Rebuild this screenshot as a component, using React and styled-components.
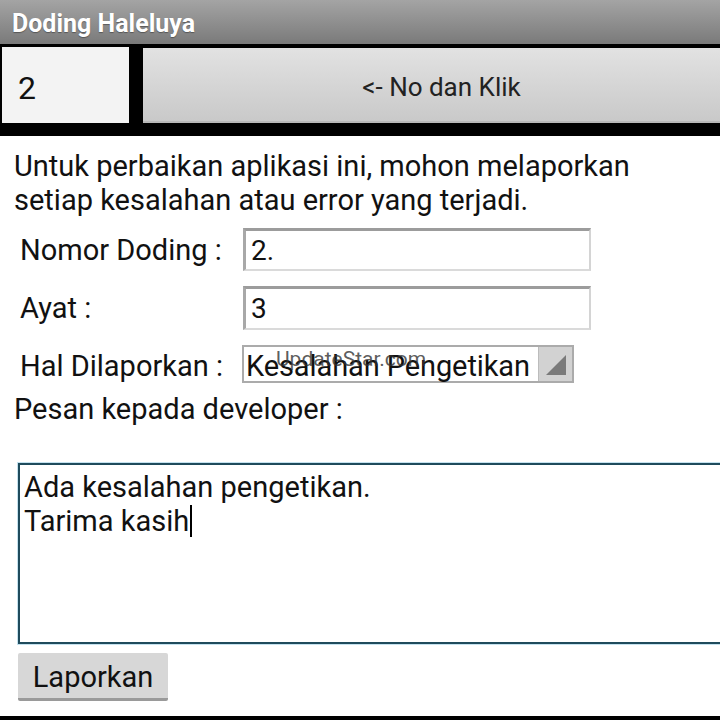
import React from 'react'
import styled, { createGlobalStyle } from 'styled-components'

const Global = createGlobalStyle`
  html, body {
    margin: 0;
    padding: 0;
    background: #ffffff;
  }
  body {
    font-family: Roboto, 'Noto Sans', 'Liberation Sans', sans-serif;
    color: #111;
  }
`

const Screen = styled.div`
  width: 720px;
  height: 720px;
  overflow: hidden;
  display: flex;
  flex-direction: column;
  background: #fff;
`

const TitleBar = styled.div`
  height: 44px;
  flex: none;
  display: flex;
  align-items: center;
  padding: 2px 0 0 12px;
  box-sizing: border-box;
  background: linear-gradient(#a4a4a4, #7a7a7a);
  color: #fff;
  font-size: 25px;
  font-weight: 700;
  text-shadow: 0 1px 1px rgba(0, 0, 0, 0.35);
`

const ActionBar = styled.div`
  flex: none;
  display: flex;
  gap: 14px;
  height: 92px;
  box-sizing: border-box;
  padding: 3px 0 13px 2px;
  background: #000;
`

const NumberBox = styled.div`
  width: 127px;
  display: flex;
  align-items: center;
  padding: 5px 0 0 16px;
  box-sizing: border-box;
  background: #f3f3f3;
  font-size: 32px;
`

const BigButton = styled.div`
  flex: 1;
  display: flex;
  align-items: center;
  justify-content: center;
  margin-top: 1px;
  padding: 4px 0 0 20px;
  background: linear-gradient(#e2e2e2, #c9c9c9);
  border-bottom: 2px solid #b8b8b8;
  font-size: 26px;
  color: #222;
`

const Content = styled.div`
  flex: 1;
  display: flex;
  flex-direction: column;
  padding: 13px 0 0 14px;
  font-size: 29px;
  line-height: 34px;
`

const Intro = styled.p`
  margin: 0;
`

const Form = styled.div`
  display: grid;
  grid-template-columns: 229px 348px;
  grid-template-rows: 43px 44px 38px;
  row-gap: 15px;
  margin-top: 11px;
  align-items: center;
`

const Label = styled.div`
  padding-left: 6px;
  margin-top: ${p => p.$shift || 0}px;
`

const Field = styled.div`
  height: 100%;
  display: flex;
  align-items: center;
  padding: 1px 0 0 5px;
  box-sizing: border-box;
  background: #fff;
  border-style: solid;
  border-width: 3px 2px 2px 3px;
  border-color: #9c9c9c #d4d4d4 #dadada #a8a8a8;
  font-size: 28px;
`

const Select = styled.div`
  position: relative;
  width: 332px;
  height: 100%;
  margin-left: -1px;
  display: flex;
  box-sizing: border-box;
  border: 2px solid #ababab;
  background: #fff;
`

const SelectText = styled.div`
  flex: 1;
  padding: 4px 0 0 2px;
  font-size: 29px;
  line-height: 30px;
  letter-spacing: -0.1px;
  white-space: nowrap;
`

const ArrowBox = styled.div`
  width: 34px;
  flex: none;
  display: flex;
  align-items: flex-end;
  justify-content: flex-end;
  padding: 0 6px 6px 0;
  box-sizing: border-box;
  background: #d2d2d2;
  border-left: 1px solid #bcbcbc;
`

const Watermark = styled.span`
  position: absolute;
  left: 32px;
  top: 1px;
  font-size: 21px;
  line-height: 22px;
  color: rgba(50, 50, 50, 0.8);
  pointer-events: none;
`

const MessageLabel = styled.div`
  margin-top: 9px;
`

const TextArea = styled.div`
  margin: 37px 0 0 4px;
  width: 720px;
  height: 181px;
  box-sizing: border-box;
  padding: 5px 0 0 4px;
  border: 2px solid #1f4b5c;
  box-shadow: 0 0 0 1px #c4e2ef;
  font-size: 29px;
  line-height: 34px;
`

const Caret = styled.span`
  display: inline-block;
  width: 2px;
  height: 32px;
  margin-left: 1px;
  vertical-align: -6px;
  background: #000;
`

const SubmitButton = styled.div`
  margin: 9px 0 0 4px;
  width: 150px;
  height: 48px;
  display: flex;
  align-items: center;
  justify-content: center;
  padding-top: 2px;
  box-sizing: border-box;
  background: #d7d7d7;
  border-bottom: 3px solid #9a9a9a;
  border-radius: 2px;
  font-size: 29px;
`

const BottomLine = styled.div`
  flex: none;
  height: 4px;
  background: #000;
`

const App = () => (
  <Screen>
    <Global />
    <TitleBar>Doding Haleluya</TitleBar>
    <ActionBar>
      <NumberBox>2</NumberBox>
      <BigButton>&lt;- No dan Klik</BigButton>
    </ActionBar>
    <Content>
      <Intro>
        Untuk perbaikan aplikasi ini, mohon melaporkan
        <br />
        setiap kesalahan atau error yang terjadi.
      </Intro>
      <Form>
        <Label>Nomor Doding :</Label>
        <Field>2.</Field>
        <Label>Ayat :</Label>
        <Field>3</Field>
        <Label $shift={4}>Hal Dilaporkan :</Label>
        <Select>
          <SelectText>Kesalahan Pengetikan</SelectText>
          <ArrowBox>
            <svg width="20" height="20" viewBox="0 0 20 20">
              <polygon points="20,0 20,20 0,20" fill="#7a7a7a" />
            </svg>
          </ArrowBox>
          <Watermark>UpdateStar.com</Watermark>
        </Select>
      </Form>
      <MessageLabel>Pesan kepada developer :</MessageLabel>
      <TextArea>
        Ada kesalahan pengetikan.
        <br />
        Tarima kasih
        <Caret />
      </TextArea>
      <SubmitButton>Laporkan</SubmitButton>
    </Content>
    <BottomLine />
  </Screen>
)

export default App
